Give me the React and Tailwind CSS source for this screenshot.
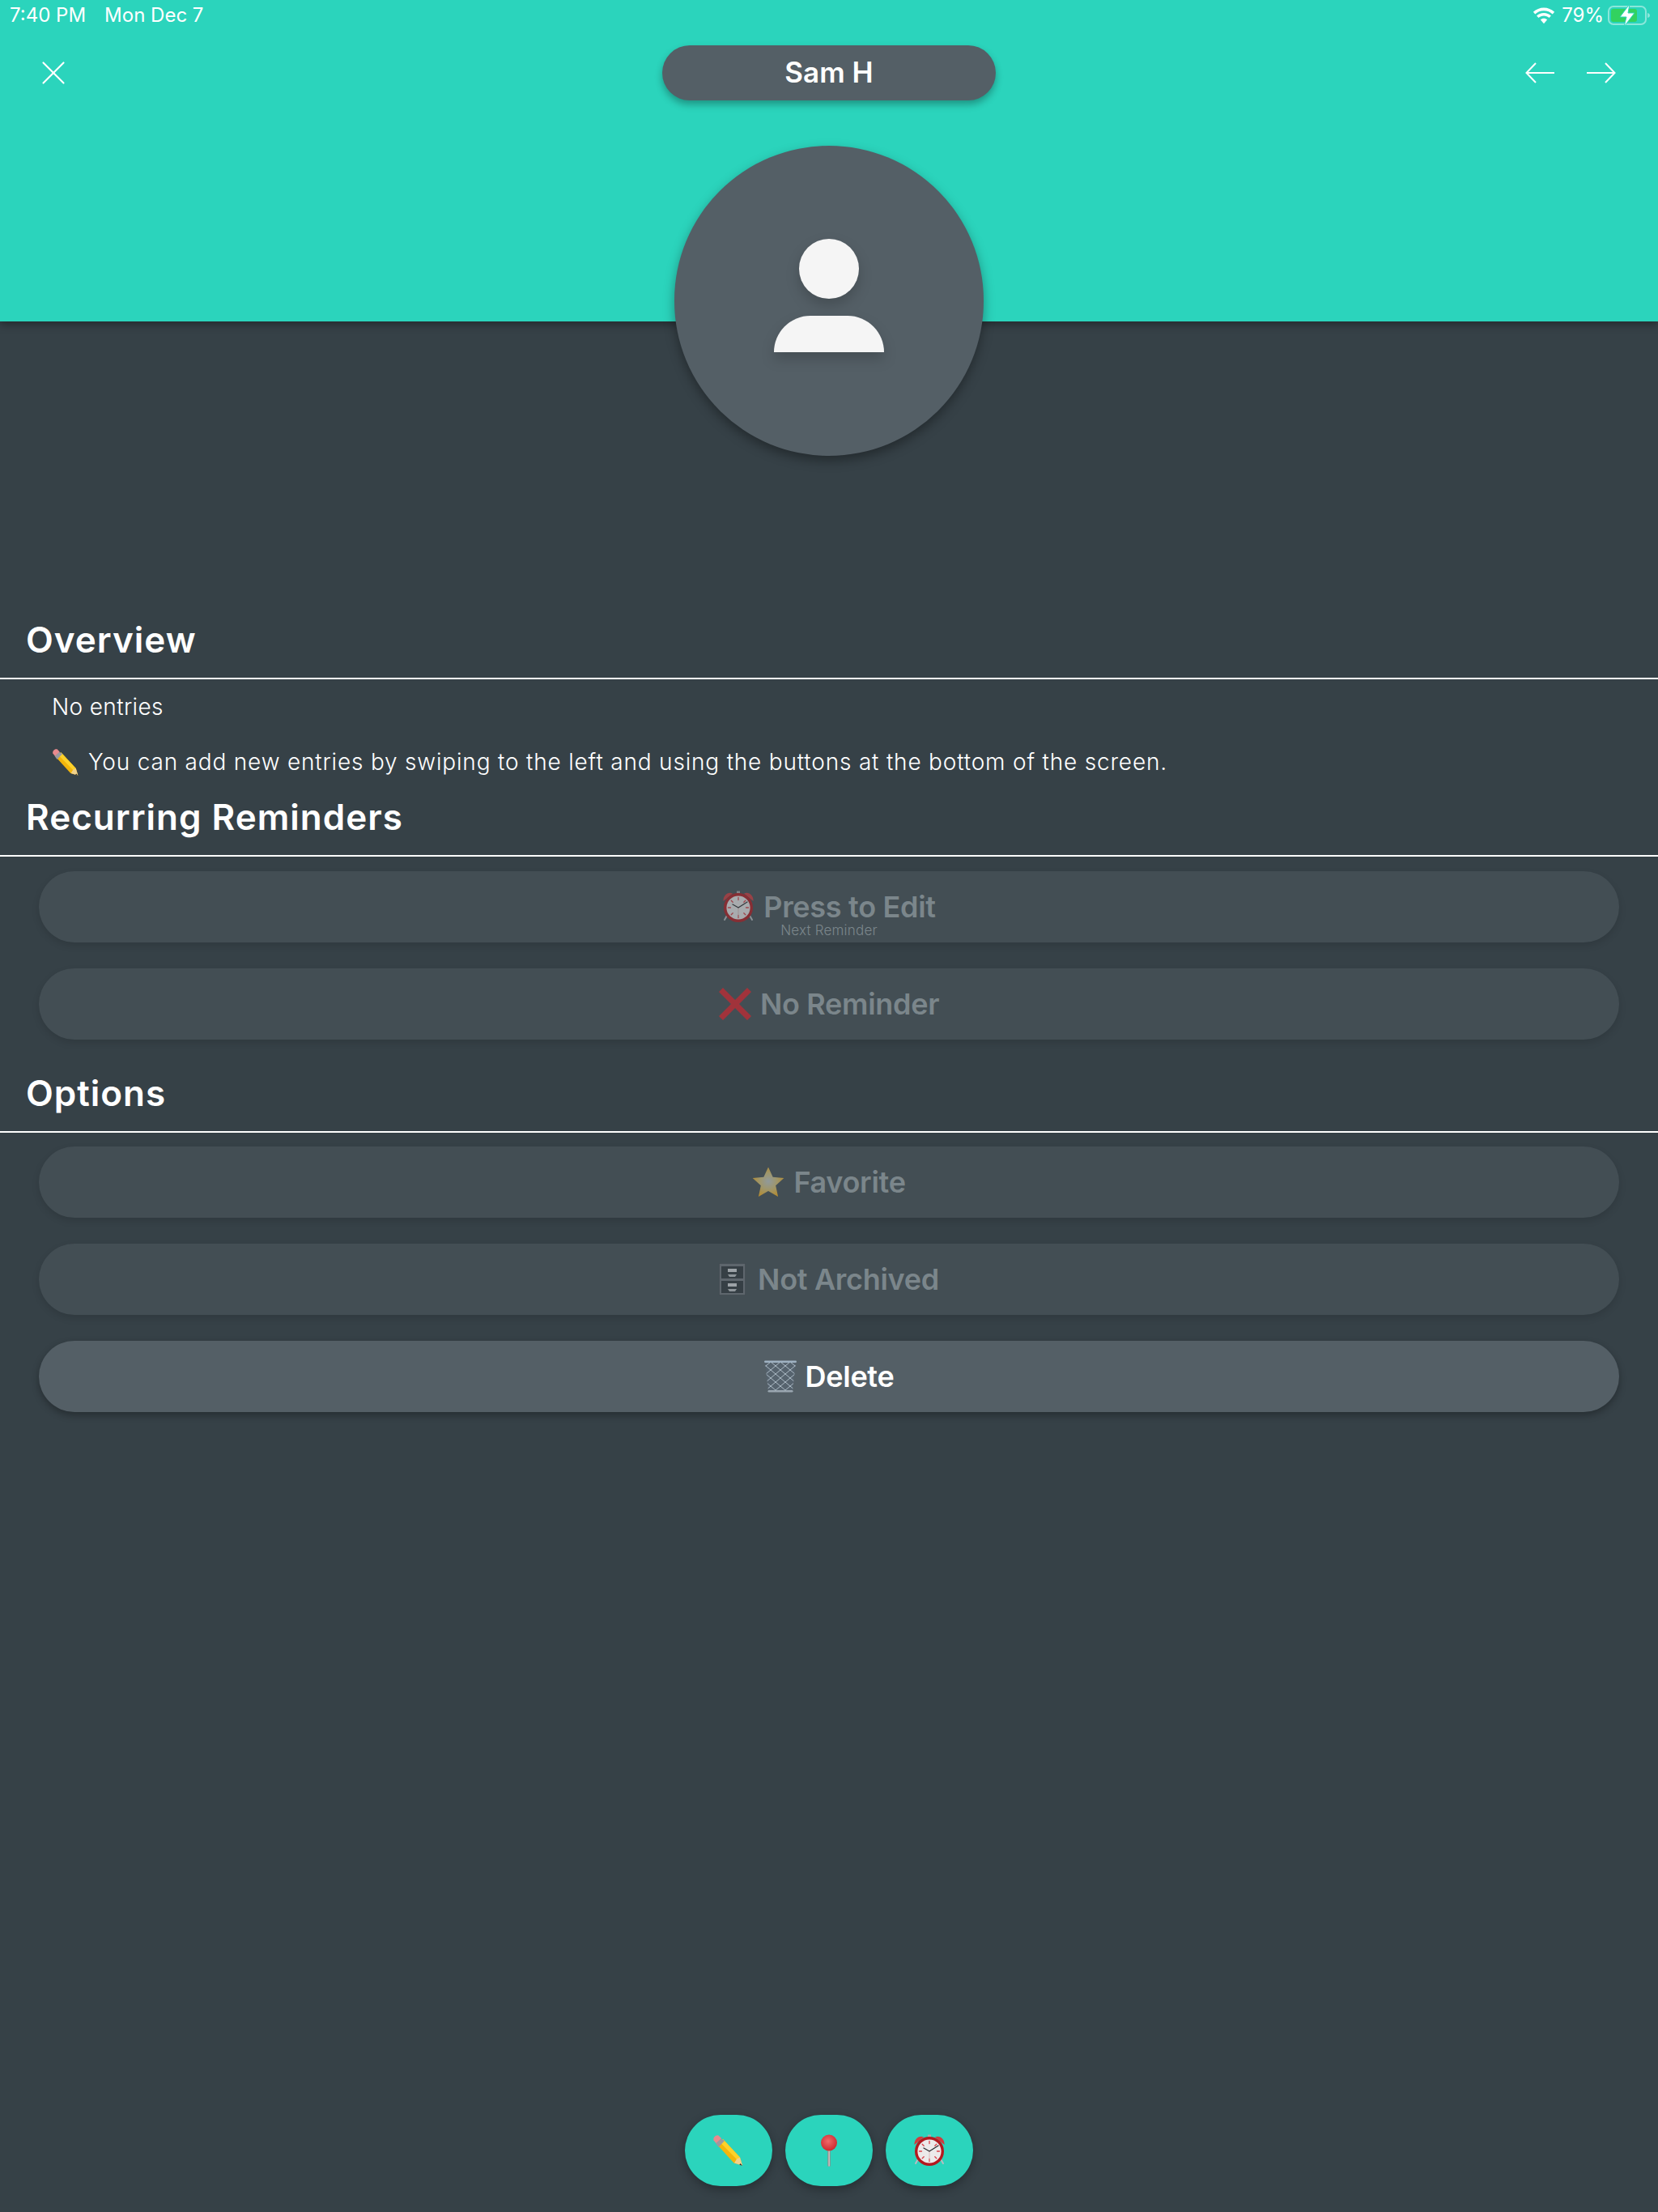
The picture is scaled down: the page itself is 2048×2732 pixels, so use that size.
import { X } from "lucide-react";

const font = { fontFamily: "Inter, 'Noto Sans', sans-serif" };

function AlarmEmoji({ className }) {
  return (
    <svg viewBox="0 0 40 40" className={className}>
      <path d="M7 29l-4 7M33 29l4 7" stroke="#b9bcc0" strokeWidth="2" strokeLinecap="round" />
      <rect x="18" y="0.5" width="4" height="3" fill="#a9a9ad" />
      <path d="M1.5 13C1 6 7 1 13 3.5z" fill="#d23a3e" />
      <path d="M38.5 13C39 6 33 1 27 3.5z" fill="#d23a3e" />
      <circle cx="20" cy="21" r="18" fill="#b3191f" />
      <circle cx="20" cy="21" r="14.6" fill="#eceaea" />
      <g stroke="#d9434a" strokeWidth="1.3" strokeLinecap="round">
        <path d="M20 8.5v3M20 30.5v3M7.5 21h3M29.5 21h3M11.2 12.2l2 2M28.8 12.2l-2 2M11.2 29.8l2-2M28.8 29.8l-2-2" />
      </g>
      <path d="M20 21v12" stroke="#d9a9a9" strokeWidth="0.7" />
      <path d="M20 21l-7-4M20 21l11-7" stroke="#2c2c30" strokeWidth="1.3" strokeLinecap="round" />
    </svg>
  );
}

function PencilEmoji({ className }) {
  return (
    <svg viewBox="0 0 40 40" className={className}>
      <path d="M6.5 13.5L13 6l21 22.500 3 10-10.500-3z" fill="#f3b50c" />
      <path d="M9.500 10L13 6l21 22.500-3.500 3z" fill="#fdd12b" />
      <path d="M27 35.500l3-5 4-2 3 10z" fill="#f1d28c" />
      <path d="M34.500 36l2.500 2.800-3.700-1z" fill="#2b2b2f" />
      <path d="M4 11l6-6 5 3-7.500 8z" fill="#9a9aa0" />
      <path d="M1.500 7.500C.5 4 4 .5 7.500 1.500L11 5l-6.500 6z" fill="#e98a8e" />
    </svg>
  );
}

function PinEmoji({ className }) {
  return (
    <svg viewBox="0 0 40 40" className={className}>
      <defs>
        <radialGradient id="pinball" cx="0.45" cy="0.4" r="0.7">
          <stop offset="0" stopColor="#f06a6a" />
          <stop offset="1" stopColor="#c81e26" />
        </radialGradient>
      </defs>
      <rect x="18.300" y="19" width="3.400" height="20.500" fill="#8d8a88" />
      <rect x="19.500" y="19" width="1.200" height="20.500" fill="#d8d6d2" />
      <circle cx="20" cy="10.500" r="10" fill="url(#pinball)" />
    </svg>
  );
}

function CrossEmoji({ className }) {
  return (
    <svg viewBox="0 0 40 40" className={className}>
      <path d="M5 0l15 15L35 0l5 5-15 15 15 15-5 5-15-15L5 40l-5-5 15-15L0 5z" fill="#e0222c" />
    </svg>
  );
}

function StarEmoji({ className }) {
  return (
    <svg viewBox="0 0 41 40" className={className}>
      <defs>
        <radialGradient id="stargold" cx="0.5" cy="0.48" r="0.55">
          <stop offset="0" stopColor="#c4cccc" />
          <stop offset="0.5" stopColor="#dcc77c" />
          <stop offset="1" stopColor="#ffb51c" />
        </radialGradient>
      </defs>
      <path d="M20.500 1l5.800 12.500 14 1.500-10.400 9.300 3 14.200L20.500 31.300 8.100 38.500l3-14.200L.7 15l14-1.500z" fill="url(#stargold)" />
    </svg>
  );
}

function CabinetEmoji({ className }) {
  return (
    <svg viewBox="0 0 33 40" className={className}>
      <rect x="0" y="0" width="33" height="40" fill="#3f474e" />
      <rect x="0.800" y="0.800" width="31.400" height="38.400" fill="#70777e" />
      <rect x="3" y="4" width="27" height="15" fill="#2f363c" />
      <rect x="3" y="22" width="27" height="15" fill="#2f363c" />
      <rect x="11" y="7" width="11" height="4" fill="#d8dbde" />
      <rect x="11" y="25" width="11" height="4" fill="#d8dbde" />
      <path d="M11 14h11l-2 3h-7zM11 32h11l-2 3h-7z" fill="#bfc3c7" />
    </svg>
  );
}

function BasketEmoji({ className }) {
  return (
    <svg viewBox="0 0 40 40" className={className}>
      <clipPath id="basketclip">
        <path d="M1 2h38l-4 36H5z" />
      </clipPath>
      <path d="M1 2h38l-4 36H5z" fill="#56636e" />
      <g clipPath="url(#basketclip)" stroke="#b6c4cf" strokeWidth="0.9" fill="none">
        <path d="M-4 2l12 10 12-10 12 10 12-10M-4 12l12 10 12-10 12 10 12-10M-4 22l12 10 12-10 12 10 12-10M-4 32l12 10 12-10 12 10 12-10" />
        <path d="M-4 12L8 2l12 10 12-10 12 10M-4 22l12-10 12 10 12-10 12 10M-4 32l12-10 12 10 12-10 12 10M-4 42l12-10 12 10 12-10 12 10" />
      </g>
      <rect x="0" y="0.500" width="40" height="2.600" rx="1.300" fill="#9fb2c2" />
      <rect x="4.500" y="37" width="31" height="2.600" rx="1.300" fill="#9aa6b0" />
    </svg>
  );
}

function PersonGlyph() {
  return (
    <div className="flex flex-col items-center drop-shadow-[0_8px_8px_rgba(0,0,0,0.18)]">
      <div className="w-[74px] h-[74px] rounded-full bg-[#f5f5f5]" />
      <div className="w-[136px] h-[45px] mt-[21px] rounded-t-[68px] bg-[#f5f5f5]" />
    </div>
  );
}

function SectionTitle({ children }) {
  return (
    <div className="h-[73px] pl-[32px] border-b-2 border-white flex items-start">
      <h2 className="text-[44px] leading-[48px] font-semibold text-white tracking-[1px]">{children}</h2>
    </div>
  );
}

function ActionButton({ icon: Icon, iconWidth = "w-[40px]", label, sub, disabled, gap = "gap-[11px]" }) {
  return (
    <button
      className={`relative h-[88px] rounded-[44px] flex items-center justify-center ${gap} ${
        disabled ? "bg-[#434e54] text-[#7b868b] shadow-[0_4px_10px_rgba(0,0,0,0.12)]" : "bg-[#545f66] text-white shadow-[0_4px_10px_rgba(0,0,0,0.3)]"
      }`}
    >
      <Icon className={`${iconWidth} h-[40px] ${disabled ? "opacity-60" : ""}`} />
      <span className="text-[36px] leading-[44px] font-semibold tracking-[-0.3px]">{label}</span>
      {sub && (
        <span className="absolute left-0 right-0 bottom-[5px] text-center text-[17px] leading-[20px] font-light tracking-[0.2px]">{sub}</span>
      )}
    </button>
  );
}

function FabButton({ icon: Icon }) {
  return (
    <button className="w-[108px] h-[88px] rounded-[44px] bg-[#2bd4bc] flex items-center justify-center shadow-[0_4px_12px_rgba(0,0,0,0.3)]">
      <Icon className="w-[40px] h-[40px]" />
    </button>
  );
}

function NavArrow({ flip }) {
  return (
    <svg viewBox="0 0 36 26" className={`w-[36px] h-[26px] ${flip ? "-scale-x-100" : ""}`} fill="none" stroke="white" strokeWidth="2">
      <path d="M13 1L1.500 13 13 25M1.500 13H36" />
    </svg>
  );
}

export default function App() {
  return (
    <div className="min-h-[2732px] bg-[#364147] flex flex-col" style={font}>
      <header className="relative z-10 h-[397px] bg-[#2bd4bc] shadow-[0_4px_10px_rgba(0,0,0,0.35)] flex flex-col items-stretch">
        {/* status bar */}
        <div className="h-[38px] pl-[12px] pr-[10px] flex items-center justify-between text-white text-[24px] leading-[38px]">
          <div className="flex gap-[23px]">
            <span>7:40 PM</span>
            <span>Mon Dec 7</span>
          </div>
          <div className="flex items-center">
            <svg viewBox="0 0 28 20" className="w-[30px] h-[21px]" fill="white">
              <path d="M14 4c4 0 7.500 1.500 10.200 4l2.300-2.500C23 2.300 18.700.4 14 .4S5 2.300 1.500 5.500L3.800 8C6.500 5.500 10 4 14 4z" />
              <path d="M14 10c2.400 0 4.600.9 6.200 2.400l2.300-2.500C20.300 7.800 17.300 6.600 14 6.600s-6.300 1.200-8.500 3.300l2.300 2.500C9.400 10.900 11.600 10 14 10z" />
              <path d="M14 13c-1.500 0-2.900.6-4 1.600l4 4.600 4-4.600c-1.100-1-2.500-1.600-4-1.600z" />
            </svg>
            <span className="ml-[7px]">79%</span>
            <svg viewBox="0 0 52 28" className="ml-[5px] w-[52px] h-[28px]">
              <rect x="1" y="3" width="46" height="22" rx="6" fill="none" stroke="white" strokeOpacity="0.45" strokeWidth="2" />
              <path d="M49 11c2 .5 3 1.500 3 3s-1 2.500-3 3z" fill="white" fillOpacity="0.45" />
              <rect x="4" y="6" width="32" height="16" rx="3" fill="#32d25f" />
              <path d="M27 0L15 16h8l-3 12 13-17h-8z" fill="white" stroke="#2bd4bc" strokeWidth="1" />
            </svg>
          </div>
        </div>

        {/* toolbar */}
        <div className="mt-[18px] h-[68px] px-[52px] grid grid-cols-[1fr_412px_1fr] items-center">
          <X className="w-[50px] h-[50px] -ml-[11px] text-white" strokeWidth={1.05} />
          <div className="h-[68px] rounded-[34px] bg-[#545f66] flex items-center justify-center text-[35px] pb-[2px] font-semibold text-white shadow-[0_5px_10px_rgba(0,0,0,0.3)]">
            Sam H
          </div>
          <div className="flex justify-end items-center gap-[40px]">
            <NavArrow />
            <NavArrow flip />
          </div>
        </div>

        {/* avatar hangs over the bottom edge of the header */}
        <div className="mt-[56px] self-center w-[382px] h-[383px] rounded-full bg-[#545f66] flex justify-center pt-[115px] shrink-0 shadow-[0_6px_14px_rgba(0,0,0,0.35)]">
          <PersonGlyph />
        </div>
      </header>

      <main className="flex-1 flex flex-col pt-[369px]">
        <SectionTitle>Overview</SectionTitle>
        <div className="pl-[64px] pt-[14px] text-white text-[28px] leading-[40px] font-light">
          <p className="tracking-[0.35px]">No entries</p>
          <p className="mt-[28px] flex items-center gap-[10px] tracking-[0.81px]">
            <PencilEmoji className="w-[35px] h-[35px]" />
            <span>You can add new entries by swiping to the left and using the buttons at the bottom of the screen.</span>
          </p>
        </div>

        <div className="mt-[24px]">
          <SectionTitle>Recurring Reminders</SectionTitle>
        </div>
        <div className="px-[48px] pt-[18px] flex flex-col gap-[32px]">
          <ActionButton icon={AlarmEmoji} label="Press to Edit" sub="Next Reminder" disabled />
          <ActionButton icon={CrossEmoji} label="No Reminder" disabled />
        </div>

        <div className="mt-[42px]">
          <SectionTitle>Options</SectionTitle>
        </div>
        <div className="px-[48px] pt-[17px] flex flex-col gap-[32px]">
          <ActionButton icon={StarEmoji} label="Favorite" disabled />
          <ActionButton icon={CabinetEmoji} iconWidth="w-[33px]" gap="gap-[15px]" label="Not Archived" disabled />
          <ActionButton icon={BasketEmoji} label="Delete" />
        </div>

        <div className="mt-auto pb-[32px] flex justify-center gap-[16px]">
          <FabButton icon={PencilEmoji} />
          <FabButton icon={PinEmoji} />
          <FabButton icon={AlarmEmoji} />
        </div>
      </main>
    </div>
  );
}
